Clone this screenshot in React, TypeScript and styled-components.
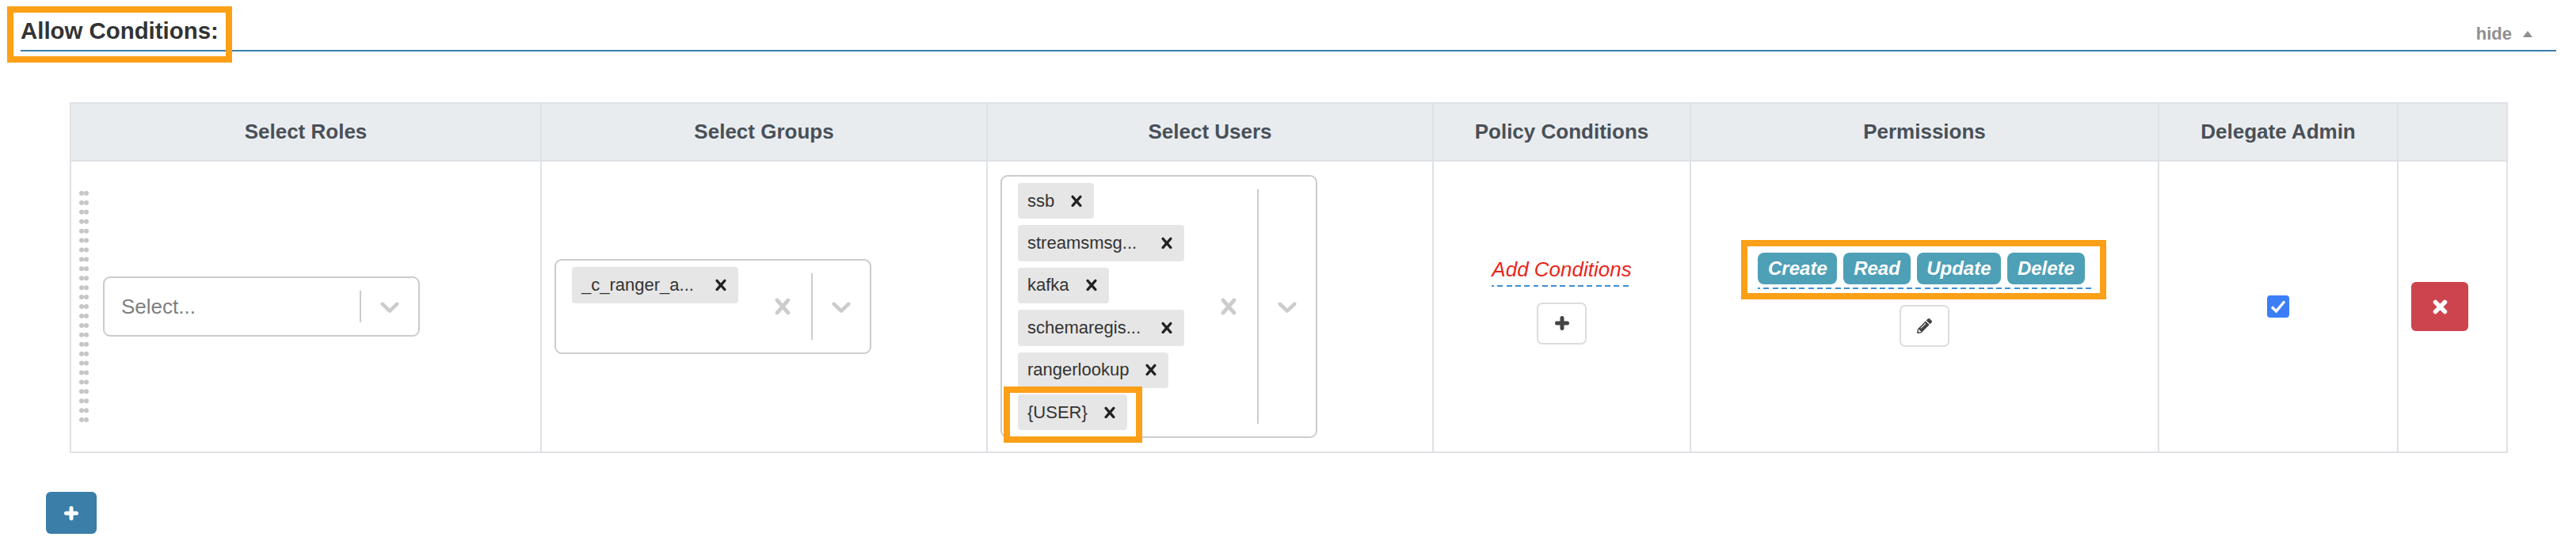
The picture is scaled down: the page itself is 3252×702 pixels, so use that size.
import {FC} from "react";
import styled, {createGlobalStyle, css} from "styled-components";
import {FaPencilAlt} from "react-icons/fa";

const ORANGE = "#fba017";
const BLUE = "#3b7ea8";

const GlobalStyle = createGlobalStyle`
  html, body {
    margin: 0;
    padding: 0;
    background: #fff;
    font-family: "Liberation Sans", Arial, sans-serif;
    color: #333;
  }
`;

const Page = styled.div`
  width: 3252px;
  height: 702px;
  overflow: hidden;
  box-sizing: border-box;
  padding: 14px 25px 0 26px;
`;

const SectionHeader = styled.div`
  display: flex;
  align-items: center;
  justify-content: space-between;
  height: 49px;
  border-bottom: 2px solid ${BLUE};
`;

const callout = css`
  position: relative;

  &::after {
    content: "";
    position: absolute;
    box-sizing: border-box;
    border: 8px solid ${ORANGE};
    pointer-events: none;
  }
`;

const Title = styled.h2`
  ${callout};
  margin: 0;
  font-size: 29.4px;
  line-height: 49px;
  font-weight: 700;
  color: #333;

  &::after {
    top: -6px;
    left: -17px;
    right: -17px;
    bottom: -16px;
  }
`;

const HideToggle = styled.a`
  display: flex;
  align-items: center;
  gap: 14px;
  padding: 8px 30px 0 0;
  font-size: 22px;
  font-weight: 700;
  color: #8f8f8f;
`;

const Caret = styled.span`
  width: 0;
  height: 0;
  border-left: 6.5px solid transparent;
  border-right: 6.5px solid transparent;
  border-bottom: 8px solid #8f8f8f;
`;

const PolicyTable = styled.table`
  width: 3078px;
  margin: 64px 0 0 62px;
  border-collapse: collapse;
  table-layout: fixed;
`;

const Col = styled.col<{ $width: number }>`
  width: ${({$width}) => $width}px;
`;

const HeadCell = styled.th`
  height: 71px;
  padding: 0;
  border: 2px solid #dee2e6;
  background: #e9ecef;
  color: #495057;
  font-size: 26px;
  font-weight: 700;
  text-align: center;
  vertical-align: middle;
`;

const Cell = styled.td<{ $center?: boolean }>`
  padding: 17px 16px;
  border: 2px solid #dee2e6;
  vertical-align: middle;
  text-align: ${({$center}) => ($center ? "center" : "left")};
`;

const RolesCell = styled(Cell)`
  padding-left: 10px;
`;

const RolesRow = styled.div`
  display: flex;
  align-items: center;
  gap: 18px;
`;

const Select = styled.div`
  display: flex;
  width: 400px;
  box-sizing: border-box;
  border: 2px solid #ccc;
  border-radius: 9px;
  background: #fff;
`;

const ValueList = styled.div<{ $tall?: boolean }>`
  flex: 1;
  display: flex;
  flex-direction: column;
  align-items: flex-start;
  justify-content: ${({$tall}) => ($tall ? "flex-start" : "center")};
  gap: 8px;
  min-height: ${({$tall}) => ($tall ? 116 : 72)}px;
  box-sizing: border-box;
  padding: ${({$tall}) => ($tall ? "8px 0 8px 20px" : "0 0 0 21px")};
`;

const Placeholder = styled.span`
  font-size: 26px;
  color: #808080;
`;

const Tag = styled.div<{ $marked?: boolean }>`
  display: flex;
  align-items: center;
  height: 45.4px;
  border-radius: 4px;
  background: #e6e6e6;
  ${({$marked}) => $marked && css`
    ${callout};

    &::after {
      top: -10px;
      left: -18px;
      right: -19px;
      bottom: -16px;
    }
  `}
`;

const TagLabel = styled.span<{ $clipped?: boolean }>`
  ${({$clipped}) => $clipped && "width: 148px;"}
  padding: 0 6px 0 12px;
  white-space: nowrap;
  font-size: 22px;
  line-height: 30px;
  color: #333;
`;

const TagRemove = styled.span`
  display: flex;
  padding: 0 8px;
  color: #222;
`;

const Indicators = styled.div`
  display: flex;
  align-items: center;
  align-self: stretch;
`;

const IndicatorIcon = styled.span`
  display: flex;
  padding: 16px;
  color: #ccc;
`;

const IndicatorSeparator = styled.span`
  align-self: stretch;
  width: 2px;
  margin: 16px 0;
  background: #ccc;
`;

const dashedLine = css`
  background-image: repeating-linear-gradient(to right, #3f8ed4 0 3px, transparent 3px 7.3px, #3f8ed4 7.3px 11.3px);
  background-position: left bottom;
  background-repeat: no-repeat;
  background-size: 100% 2px;
`;

const AddConditions = styled.a`
  ${dashedLine};
  display: inline-block;
  padding-bottom: 3px;
  font-size: 26px;
  font-style: italic;
  line-height: 37px;
  color: #e8281c;
`;

const Badges = styled.div`
  ${callout};
  ${dashedLine};
  display: inline-flex;
  gap: 8px;
  padding: 0 8px 6px 0;

  &::after {
    top: -16px;
    left: -21px;
    right: -19px;
    bottom: -13px;
  }
`;

const Badge = styled.span`
  display: flex;
  align-items: center;
  height: 40px;
  padding: 0 12.7px;
  border-radius: 8px;
  background: #4ea0b7;
  color: #fff;
  font-size: 24px;
  font-style: italic;
  font-weight: 700;
`;

const EditButton = styled.button`
  display: block;
  width: 63px;
  height: 53px;
  margin: 20px auto 18px;
  padding: 0;
  border: 2px solid #ddd;
  border-radius: 7px;
  background: #fff;
  color: #444;

  svg {
    display: block;
    margin: 0 auto;
  }
`;

const CheckMark = styled.span`
  display: inline-flex;
  align-items: center;
  justify-content: center;
  width: 28px;
  height: 28px;
  border-radius: 4px;
  background: #3b7ef6;
  vertical-align: middle;
`;

const solidButton = css`
  display: flex;
  align-items: center;
  justify-content: center;
  padding: 0;
  border: 0;
  border-radius: 6px;
  color: #fff;
`;

const DeleteButton = styled.button`
  ${solidButton};
  width: 72px;
  height: 62px;
  background: #cc444d;
`;

const AddRowButton = styled.button`
  ${solidButton};
  width: 64px;
  height: 53px;
  margin: 49px 0 0 32px;
  background: ${BLUE};
`;

const ClearGlyph: FC<{ size: number }> = ({size}) => (
    <svg width={size} height={size} viewBox="0 0 20 20" fill="currentColor">
        <path
            d="M14.348 14.849c-0.469 0.469-1.229 0.469-1.697 0l-2.651-3.030-2.651 3.029c-0.469 0.469-1.229 0.469-1.697 0-0.469-0.469-0.469-1.229 0-1.697l2.758-3.15-2.759-3.152c-0.469-0.469-0.469-1.228 0-1.697s1.228-0.469 1.697 0l2.652 3.031 2.651-3.031c0.469-0.469 1.228-0.469 1.697 0s0.469 1.229 0 1.697l-2.758 3.152 2.758 3.15c0.469 0.469 0.469 1.229 0 1.698z"/>
    </svg>
);

const ChevronGlyph = () => (
    <svg width={40} height={40} viewBox="0 0 20 20" fill="currentColor">
        <path
            d="M4.516 7.548c0.436-0.446 1.043-0.481 1.576 0l3.908 3.747 3.908-3.747c0.533-0.481 1.141-0.446 1.574 0 0.436 0.445 0.408 1.197 0 1.615-0.406 0.418-4.695 4.502-4.695 4.502-0.217 0.223-0.502 0.335-0.787 0.335s-0.57-0.112-0.789-0.335c0 0-4.287-4.084-4.695-4.502s-0.436-1.17 0-1.615z"/>
    </svg>
);

const PlusGlyph = () => (
    <svg width={18} height={18} viewBox="0 0 18 18" stroke="currentColor" strokeWidth={5} strokeLinecap="round">
        <path d="M9 2.5V15.5M2.5 9H15.5"/>
    </svg>
);

const CrossGlyph = () => (
    <svg width={19} height={19} viewBox="0 0 19 19" stroke="currentColor" strokeWidth={5.5} strokeLinecap="round">
        <path d="M3.5 3.5L15.5 15.5M15.5 3.5L3.5 15.5"/>
    </svg>
);

const CheckGlyph = () => (
    <svg width={20} height={18} viewBox="0 0 20 18" fill="none" stroke="#fff" strokeWidth={3.4}>
        <path d="M2 9.5L7.5 15L18 2.5"/>
    </svg>
);

const DragHandle = () => (
    <svg width={12} height={292} viewBox="0 0 12 292" fill="#c6c6c6">
        {Array.from({length: 25}, (_, row) => (
            <g key={row}>
                <circle cx={3} cy={3 + row * 11.92} r={3}/>
                <circle cx={9} cy={3 + row * 11.92} r={3}/>
            </g>
        ))}
    </svg>
);

const SelectIndicators: FC<{ clearable?: boolean }> = ({clearable}) => (
    <Indicators>
        {clearable && <IndicatorIcon><ClearGlyph size={40}/></IndicatorIcon>}
        <IndicatorSeparator/>
        <IndicatorIcon><ChevronGlyph/></IndicatorIcon>
    </Indicators>
);

const UserTag: FC<{ label: string, marked?: boolean }> = ({label, marked}) => (
    <Tag $marked={marked}>
        <TagLabel $clipped={label.endsWith("...")}>{label}</TagLabel>
        <TagRemove><ClearGlyph size={28}/></TagRemove>
    </Tag>
);

const columns = [
    {title: "Select Roles", width: 594},
    {title: "Select Groups", width: 563},
    {title: "Select Users", width: 563},
    {title: "Policy Conditions", width: 325},
    {title: "Permissions", width: 591},
    {title: "Delegate Admin", width: 302},
    {title: "", width: 138},
];

const users = ["ssb", "streamsmsg...", "kafka", "schemaregis...", "rangerlookup"];
const permissions = ["Create", "Read", "Update", "Delete"];

export default function App() {
    return (
        <Page>
            <GlobalStyle/>
            <SectionHeader>
                <Title>Allow Conditions:</Title>
                <HideToggle>hide <Caret/></HideToggle>
            </SectionHeader>

            <PolicyTable>
                <colgroup>
                    {columns.map((column) => <Col key={column.title} $width={column.width}/>)}
                </colgroup>
                <thead>
                <tr>
                    {columns.map((column) => <HeadCell key={column.title}>{column.title}</HeadCell>)}
                </tr>
                </thead>
                <tbody>
                <tr>
                    <RolesCell>
                        <RolesRow>
                            <DragHandle/>
                            <Select>
                                <ValueList><Placeholder>Select...</Placeholder></ValueList>
                                <SelectIndicators/>
                            </Select>
                        </RolesRow>
                    </RolesCell>
                    <Cell>
                        <Select>
                            <ValueList $tall><UserTag label="_c_ranger_a..."/></ValueList>
                            <SelectIndicators clearable/>
                        </Select>
                    </Cell>
                    <Cell>
                        <Select>
                            <ValueList $tall>
                                {users.map((user) => <UserTag key={user} label={user}/>)}
                                <UserTag label="{USER}" marked/>
                            </ValueList>
                            <SelectIndicators clearable/>
                        </Select>
                    </Cell>
                    <Cell $center>
                        <AddConditions>Add Conditions</AddConditions>
                        <EditButton><PlusGlyph/></EditButton>
                    </Cell>
                    <Cell $center>
                        <Badges>
                            {permissions.map((permission) => <Badge key={permission}>{permission}</Badge>)}
                        </Badges>
                        <EditButton><FaPencilAlt size={19}/></EditButton>
                    </Cell>
                    <Cell $center>
                        <CheckMark><CheckGlyph/></CheckMark>
                    </Cell>
                    <Cell>
                        <DeleteButton><CrossGlyph/></DeleteButton>
                    </Cell>
                </tr>
                </tbody>
            </PolicyTable>

            <AddRowButton><PlusGlyph/></AddRowButton>
        </Page>
    );
}
